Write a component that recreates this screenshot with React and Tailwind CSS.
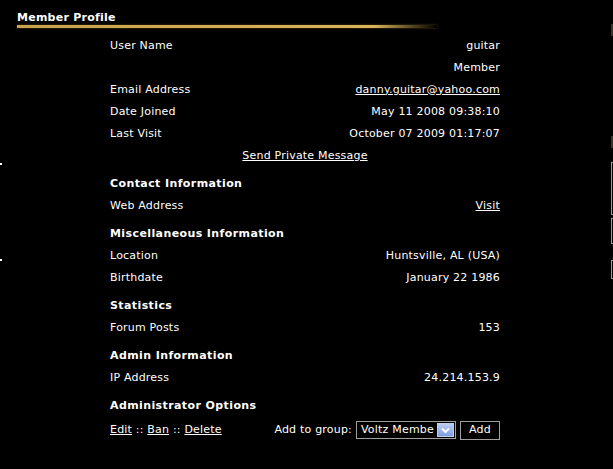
import React from "react";

function Row({ label, value, link }) {
  return (
    <div className="flex h-[22px] items-center justify-between">
      <span>{label}</span>
      {link ? <a className="underline cursor-pointer">{value}</a> : <span>{value}</span>}
    </div>
  );
}

function Heading({ children }) {
  return (
    <div className="h-[28px] pt-[6px]">
      <div className="flex h-[22px] items-center font-bold tracking-[0.4px]">{children}</div>
    </div>
  );
}

export default function App() {
  return (
    <div
      className="relative h-[469px] w-[613px] overflow-hidden bg-black text-white text-[11px] tracking-[0.2px]"
      style={{ fontFamily: 'Verdana, "DejaVu Sans", sans-serif' }}
    >
      <div className="h-[35px] pl-[17px] pt-[11px]">
        <div className="font-bold text-[11px] leading-[13px] tracking-[0.25px]">Member Profile</div>
        <div className="mt-[1px] h-[3px] w-[420px] bg-[linear-gradient(to_right,#c9a14a_0%,#d9b55a_85%,rgba(201,161,74,0)_100%)] shadow-[0_0_2px_#6b5220]" />
      </div>

      <div className="ml-[110px] w-[390px]">
        <Row label="User Name" value="guitar" />
        <Row label="" value="Member" />
        <Row label="Email Address" value="danny.guitar@yahoo.com" link />
        <Row label="Date Joined" value="May 11 2008 09:38:10" />
        <Row label="Last Visit" value="October 07 2009 01:17:07" />
        <div className="flex h-[22px] items-center justify-center">
          <a className="underline cursor-pointer">Send Private Message</a>
        </div>

        <Heading>Contact Information</Heading>
        <Row label="Web Address" value="Visit" link />

        <Heading>Miscellaneous Information</Heading>
        <Row label="Location" value="Huntsville, AL (USA)" />
        <Row label="Birthdate" value="January 22 1986" />

        <Heading>Statistics</Heading>
        <Row label="Forum Posts" value="153" />

        <Heading>Admin Information</Heading>
        <Row label="IP Address" value="24.214.153.9" />

        <Heading>Administrator Options</Heading>
        <div className="mt-[2px] flex h-[22px] items-center justify-between">
          <div>
            <a className="underline">Edit</a> :: <a className="underline">Ban</a> ::{" "}
            <a className="underline">Delete</a>
          </div>
          <div className="flex items-center">
            <span className="mr-[4px]">Add to group:</span>
            <div className="flex h-[18px] w-[100px] items-center border border-[#a0a0a0] bg-black pl-[4px]">
              <span className="flex-1 whitespace-nowrap">Voltz Membe</span>
              <div className="mr-[1px] flex h-[14px] w-[17px] items-center justify-center border border-[#c0cfe8] bg-[linear-gradient(to_bottom,#b9cdf3,#7c9ee0)]">
                <svg width="9" height="7" viewBox="0 0 9 7">
                  <path d="M1 1.5 L4.5 5 L8 1.5" stroke="#fff" strokeWidth="2" fill="none" />
                </svg>
              </div>
            </div>
            <div className="ml-[4px] flex h-[19px] w-[40px] items-center justify-center border border-[#a0a0a0] bg-black">
              Add
            </div>
          </div>
        </div>
      </div>

      {/* edge fragments of neighbouring windows */}
      <div className="absolute left-[611px] top-[162px] h-[53px] w-[2px] border-l border-t border-b border-[#9a9a9a]" />
      <div className="absolute left-[611px] top-[218px] h-[26px] w-[2px] border-l border-t border-b border-[#9a9a9a]" />
      <div className="absolute left-[611px] top-[260px] h-[19px] w-[2px] border-l border-t border-b border-[#9a9a9a]" />
      <div className="absolute left-[611px] top-[24px] h-[12px] w-[2px] bg-[#3a3320]" />
      <div className="absolute left-[611px] top-[136px] h-[12px] w-[2px] bg-[#3a3320]" />
      <div className="absolute left-[0px] top-[163px] h-[2px] w-[2px] bg-white" />
      <div className="absolute left-[0px] top-[259px] h-[2px] w-[2px] bg-white" />
    </div>
  );
}
